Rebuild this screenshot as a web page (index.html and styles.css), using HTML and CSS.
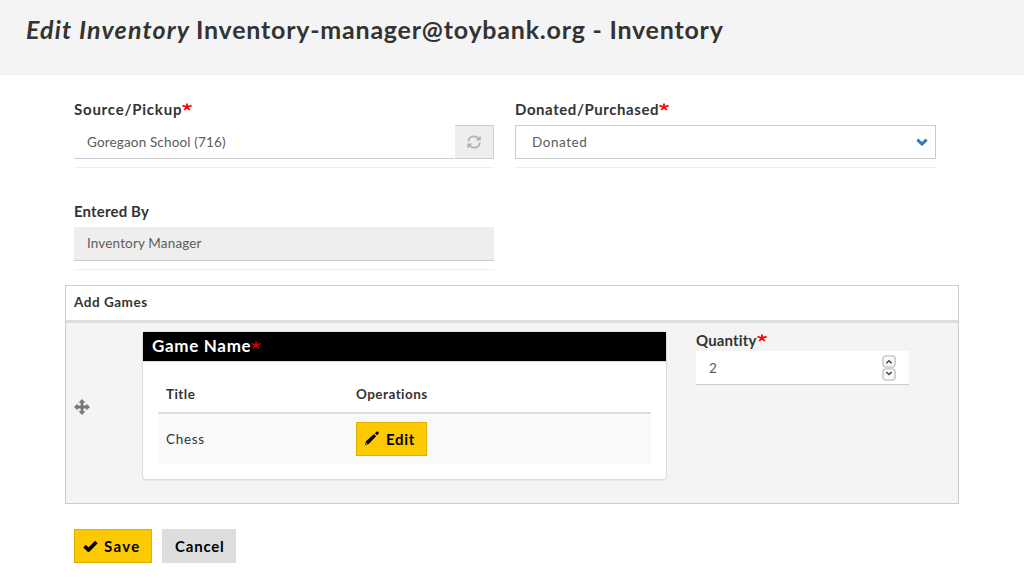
FILE: index.html
```html
<!DOCTYPE html>
<html lang="en">
<head>
<meta charset="utf-8">
<title>Edit Inventory</title>
<link rel="stylesheet" href="styles.css">
</head>
<body>
<header class="page-header"><h1 class="page-title"><em class="title-em">Edit Inventory</em> <span class="title-rest">Inventory-manager@toybank.org - Inventory</span></h1></header>
<main class="form">
  <div class="fields">
    <div class="field">
      <label class="label l-source">Source/Pickup<svg class="star" viewBox="0 0 10 8"><path d="M5 4V.4M5 4L.4 2.600M5 4L9.600 2.600M5 4L2.200 7M5 4L7.800 7"/></svg></label>
      <div class="input-group">
        <div class="control v-source">Goregaon School (716)</div>
        <div class="addon"><svg class="refresh" viewBox="0 0 14 14"><path class="arc" d="M1.3 6.4C1.5 3.4 3.8 1.3 6.8 1.3c1.8 0 3.3.7 4.4 2M12.7 7.6c-.2 3-2.5 5.1-5.5 5.1-1.8 0-3.3-.7-4.4-2"/><path class="tip" d="M13.7.4v5H8.6zM.3 13.6v-5h5.1z"/></svg></div>
      </div>
    </div>
    <div class="field">
      <label class="label l-donated">Donated/Purchased<svg class="star" viewBox="0 0 10 8"><path d="M5 4V.4M5 4L.4 2.600M5 4L9.600 2.600M5 4L2.200 7M5 4L7.800 7"/></svg></label>
      <div class="select"><span class="v-donated">Donated</span><svg class="chevron" viewBox="0 0 12 8"><path d="M1.4 1.6L6 6l4.600-4.400"/></svg></div>
    </div>
    <div class="field entered">
      <label class="label l-entered">Entered By</label>
      <div class="control disabled v-entered">Inventory Manager</div>
    </div>
  </div>
  <section class="games">
    <h2 class="games-title">Add Games</h2>
    <div class="games-row">
      <svg class="move" viewBox="0 0 16 16"><path d="M8 0l3.500 3.700H9.400v2.900h2.900V4.500L16 8l-3.700 3.500V9.400H9.400v2.900h2.100L8 16l-3.500-3.700h2.100V9.400H3.700v2.100L0 8l3.700-3.500v2.100h2.900V3.700H4.500z"/></svg>
      <div class="panel">
        <div class="panel-head"><span class="l-game">Game Name</span><svg class="star dark" viewBox="0 0 10 8"><path d="M5 4V.4M5 4L.4 2.600M5 4L9.600 2.600M5 4L2.200 7M5 4L7.800 7"/></svg></div>
        <div class="table">
          <div class="tr th"><span class="t-title">Title</span><span class="t-ops">Operations</span></div>
          <div class="tr td"><span class="t-chess">Chess</span><button class="btn edit"><svg class="pencil" viewBox="0 0 14 14"><path d="M0 14l1-3.700L9 3l2.100 2.200L3.600 13zM9.900 2.200l1.500-1.400c.6-.5 1.100-.5 1.500-.1l.6.6c.5.5.4 1-.1 1.500L12 4.300z"/><path class="nib" d="M.9 13.100l.3-1.300 1.100 1z"/></svg><span class="b-edit">Edit</span></button></div>
        </div>
      </div>
      <div class="quantity">
        <label class="label l-qty">Quantity<svg class="star" viewBox="0 0 10 8"><path d="M5 4V.4M5 4L.4 2.600M5 4L9.600 2.600M5 4L2.200 7M5 4L7.800 7"/></svg></label>
        <div class="control number"><span class="two">2</span><svg class="spin" viewBox="0 0 14 26"><rect x=".9" y=".9" width="12.200" height="11.200" rx="3"/><rect x=".9" y="13.900" width="12.200" height="11.200" rx="3"/><path d="M4.300 8.300L7 5.800l2.700 2.500M4.300 17L7 19.500 9.700 17"/></svg></div>
      </div>
    </div>
  </section>
  <div class="actions">
    <button class="btn save"><svg class="check" viewBox="0 0 15 12"><path d="M1.500 6.100l4 3.900L13.400 1.900"/></svg><span class="b-save">Save</span></button>
    <button class="btn cancel"><span class="b-cancel">Cancel</span></button>
  </div>
</main>
</body>
</html>
```
FILE: styles.css
```css
* { box-sizing: border-box; }
body { margin: 0; background: #fff; color: #333; font: 13px/20px Lato, "Open Sans", sans-serif; overflow: hidden; }
svg { display: block; flex: none; }
.page-header { height: 75px; background: #f4f4f4; border-bottom: 1px solid #eee; padding: 13px 26px 0; }
.page-title { margin: 0; font-size: 25px; line-height: 32px; font-weight: 700; display: flex; gap: 6px; white-space: nowrap; }
.title-em { width: 164px; letter-spacing: 1.170px; }
.title-rest { letter-spacing: .78px; }
.form { padding: 25px 65px 0; }
.fields { display: grid; grid-template-columns: 420px 421px; column-gap: 21px; padding: 0 9px; }
.field { height: 68px; border-bottom: 1px solid #eee; }
.entered { margin-top: 34px; }
.label { display: flex; font-size: 15px; line-height: 18px; height: 25px; font-weight: 700; white-space: nowrap; }
.star { width: 10px; height: 8px; margin-top: 3px; fill: none; stroke: #f00; stroke-width: 1.800; }
.dark { stroke: #d00; stroke-width: 1.500; margin-top: 9px; }
.input-group { display: flex; }
.control { height: 34px; flex: 1; padding: 7px 13px; background: #fff; border-bottom: 1px solid #ccc; color: #5c5c5c; font-size: 13.500px; white-space: nowrap; }
.disabled { background: #eee; padding-top: 6px; }
.addon { width: 39px; height: 34px; margin-left: 1px; background: #eee; border: 1px solid #ccc; border-left: 0; display: flex; align-items: center; justify-content: center; }
.refresh { width: 14px; height: 14px; }
.arc { fill: none; stroke: #b0b0b0; stroke-width: 1.800; }
.tip { fill: #b0b0b0; }
.select { height: 34px; border: 1px solid #ccc; display: flex; align-items: center; justify-content: space-between; padding: 0 7px 0 16px; color: #5c5c5c; font-size: 13.500px; }
.chevron { width: 12px; height: 8px; fill: none; stroke: #337ab7; stroke-width: 3; }
.games { margin-top: 15px; height: 219px; border: 1px solid #ccc; background: #f4f4f4; }
.games-title { margin: 0; height: 37px; border-bottom: 3px solid #ddd; background: #fff; font-size: 13.500px; line-height: 33px; padding-left: 8px; font-weight: 700; letter-spacing: .52px; }
.games-row { display: flex; padding: 8px 8px 0; }
.move { width: 16px; height: 16px; margin-top: 68px; fill: #777; }
.panel { width: 525px; height: 149px; margin-left: 52px; background: #fff; border: 1px solid #ddd; border-radius: 4px; box-shadow: 0 1px 1px rgba(0,0,0,.05); }
.panel-head { height: 30px; background: #000; border-bottom: 1px solid #ddd; color: #fff; font-size: 17px; font-weight: 700; line-height: 28px; padding-left: 9px; display: flex; }
.table { margin: 15px 15px 0; }
.tr { display: grid; grid-template-columns: 190px 1fr; padding: 0 8px; align-items: center; }
.th { height: 37px; padding-bottom: 1px; border-bottom: 2px solid #ddd; font-weight: 700; font-size: 13.500px; }
.td { height: 50px; background: #f9f9f9; font-size: 13.500px; }
.btn { height: 34px; border: 1px solid #deb100; background: #fdc900; color: #000; font: 700 15px/20px Lato, "Open Sans", sans-serif; display: flex; align-items: center; padding: 0 8px 1px; white-space: nowrap; }
.edit { width: 71px; gap: 7px; }
.pencil { width: 14px; height: 14px; fill: #000; margin-top: -1px; }
.nib { fill: #fdc900; }
.quantity { width: 213px; margin-left: 29px; }
.quantity .label { height: 20px; }
.number { display: flex; justify-content: space-between; }
.spin { width: 14px; height: 26px; margin-top: -3px; fill: #f8f8f8; stroke: #c4c4c4; stroke-width: 1.400; }
.spin path { fill: none; stroke: #444; stroke-width: 1.500; }
.actions { display: flex; gap: 10px; padding: 25px 9px 0; }
.save { width: 78px; gap: 6px; }
.check { width: 15px; height: 12px; fill: none; stroke: #000; stroke-width: 3.600; }
.cancel { width: 74px; background: #ddd; border-color: #ddd; padding-left: 12px; }

/* Tracking per text */
.l-source { letter-spacing: .78px; }
.l-donated { letter-spacing: .57px; }
.l-entered { letter-spacing: .15px; }
.l-qty { letter-spacing: .15px; }
.l-game { letter-spacing: .68px; }
.v-source { letter-spacing: .15px; }
.v-donated { letter-spacing: .55px; }
.v-entered { letter-spacing: .15px; }
.t-title, .t-ops { letter-spacing: .45px; }
.t-chess { letter-spacing: .7px; }
.b-edit { letter-spacing: .7px; }
.b-save { letter-spacing: 1.300px; }
.b-cancel { letter-spacing: .8px; }
```
